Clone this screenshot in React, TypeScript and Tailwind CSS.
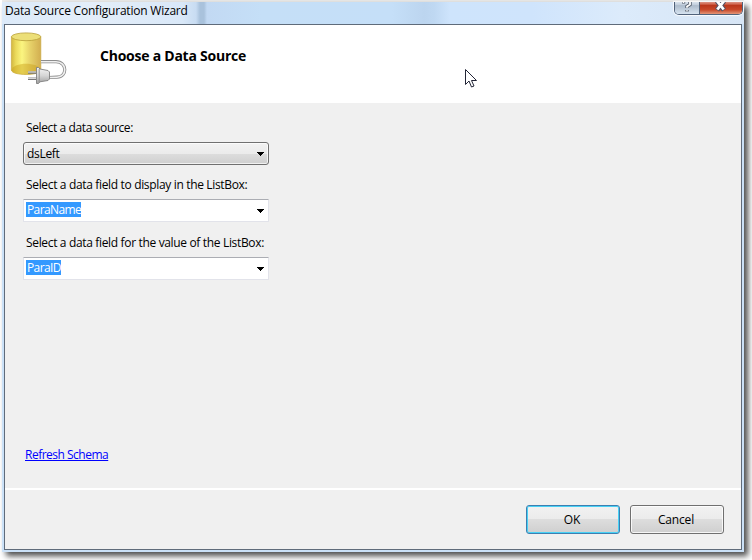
import React from 'react';

function Arrow() {
  return (
    <svg width="7" height="4" viewBox="0 0 7 4" shapeRendering="crispEdges">
      <path d="M0 0H7V1H6V2H5V3H4V4H3V3H2V2H1V1H0Z" fill="#000" />
    </svg>
  );
}

function DataSourceIcon() {
  return (
    <svg className="ml-[5px] mt-[7px] shrink-0" width="58" height="54" viewBox="0 0 58 54">
      <defs>
        <linearGradient id="body">
          <stop offset="0" stopColor="#d3b840" />
          <stop offset=".15" stopColor="#ebda5c" />
          <stop offset=".36" stopColor="#fbf580" />
          <stop offset=".65" stopColor="#e6d068" />
          <stop offset="1" stopColor="#d2ae50" />
        </linearGradient>
        <linearGradient id="plug" x2="0" y2="1">
          <stop offset="0" stopColor="#f4f4f4" />
          <stop offset=".5" stopColor="#d6d6d6" />
          <stop offset="1" stopColor="#a0a0a0" />
        </linearGradient>
      </defs>
      <path d="M1.4 4.8V38C1.4 44 30.8 44 30.8 38V4.8Z" fill="url(#body)" stroke="#c8a93f" strokeWidth=".7" />
      <path d="M1.6 38C3 29.5 29 29.5 30.6 38C29 43.8 3 43.8 1.6 38Z" fill="#c99f16" opacity=".45" />
      <ellipse cx="16.1" cy="4.8" rx="14.7" ry="3.9" fill="#ecdf78" stroke="#b9a03a" strokeWidth=".8" />
      <path d="M31 29.7H46C57.5 29.7 57.5 45.2 47 45.2L39 45.5" fill="none" stroke="#8c8c8c" strokeWidth="3.2" />
      <path d="M31 29.7H46C57.5 29.7 57.5 45.2 47 45.2L39 45.5" fill="none" stroke="#f0f0f0" strokeWidth="1.6" />
      <path d="M18 40.5H26M18 46.8H26" stroke="#777" strokeWidth="2.4" />
      <path d="M18 40H26M18 46.3H26" stroke="#eee" strokeWidth="1" />
      <path d="M26.5 35.5H28.5L30 37 38 38.5 39.5 40V47L38 48.5 30 49.8 28.5 51.5H26.5Z" fill="url(#plug)" stroke="#808080" strokeWidth=".9" />
      <path d="M29.2 37V50" stroke="#8a8a8a" strokeWidth=".9" />
    </svg>
  );
}

function Combo({ value, editable = false }: { value: string; editable?: boolean }) {
  return (
    <div
      className={
        editable
          ? 'flex h-[23px] w-[246px] items-center justify-between rounded-[1px] border border-[#e2e3ea] border-t-[#abadb3] bg-white pl-[2px] pr-[4px]'
          : 'flex h-[23px] w-[246px] items-center justify-between rounded-[3px] border border-[#707070] bg-[linear-gradient(#f2f2f2_0,#ebebeb_50%,#dddddd_50%,#cfcfcf_100%)] pl-[3px] pr-[4px] shadow-[inset_0_0_0_1px_rgba(255,255,255,0.7)]'
      }
    >
      <span
        className={
          editable
            ? '-mt-[2px] h-[15px] bg-[#3399ff] pl-px leading-[15px] tracking-[-0.6px] text-white'
            : 'leading-[15px] tracking-[-0.3px]'
        }
      >
        {value}
      </span>
      <Arrow />
    </div>
  );
}

function TitleBar() {
  return (
    <div className="relative h-[22px] shrink-0 bg-[linear-gradient(90deg,#dceaf9_0,#e4eef9_90px,#d9e8f8_180px,#c8dcf2_194px,#a9c2dc_198px,#a9c2dc_202px,#c2d9f3_205px,#c5dff7_260px,#c5dff8_390px,#bcd5ef_422px,#bfd8f2_432px,#cee4fc_448px,#cfe4fc_530px,#dcebfb_620px,#d7e5f5_100%)]">
      <div className="pl-[3px] leading-[17px] tracking-[-0.21px]">Data Source Configuration Wizard</div>
      <div className="absolute right-[1px] top-0 flex h-[13px] w-[69px] overflow-hidden rounded-b-[5px] border border-t-0 border-[#51627a] shadow-[0_0_1px_1px_rgba(255,255,255,0.8)]">
        <div className="flex w-[25px] justify-center border-r border-[#51627a] bg-[linear-gradient(#dae3ed_0,#c0ccda_25%,#adbbcb_30%,#d6e3f0_100%)]">
          <svg width="10" height="11" viewBox="0 0 10 11">
            <path d="M1.5 1.5V0M8 -1V2.5L5 4.5V6M5 8V9.5" fill="none" stroke="#505967" strokeWidth="3.4" />
            <path d="M1.5 1V0M8 -1V2.5L5 4.5V5.8M5 8.2V9.2" fill="none" stroke="#fff" strokeWidth="1.8" />
          </svg>
        </div>
        <div className="flex grow justify-center bg-[linear-gradient(#dc9586_0,#ce6048_20%,#b8351a_25%,#c84829_65%,#e39679_100%)] pr-[2px]">
          <svg width="13" height="11" viewBox="0 0 13 11">
            <path d="M3 -1L10 8M10 -1L3 8" stroke="#575364" strokeWidth="5" />
            <path d="M3 -1L9.7 7.5M10 -1L3.3 7.5" stroke="#fff" strokeWidth="2.8" />
          </svg>
        </div>
      </div>
    </div>
  );
}

const buttonFace =
  'flex h-[29px] w-[94px] items-center justify-center rounded-[3px] border bg-[linear-gradient(#f2f2f2_0,#ebebeb_50%,#dddddd_50%,#cfcfcf_100%)] pr-[2px] tracking-[-0.15px]';

export default function App() {
  return (
    <div className="relative h-[560px] w-[752px] overflow-hidden bg-white pl-[2px] font-['Open_Sans','Noto_Sans',sans-serif] text-[12px] text-black">
      <div className="h-[2px] w-[742px] bg-[#ebebea]" />
      <div className="flex h-[550px] w-[742px] flex-col bg-[#cbe1f7] shadow-[4px_4px_6px_rgba(0,0,0,0.7)]">
        <TitleBar />
        <main className="ml-[2px] flex h-[526px] w-[738px] flex-col border border-[#5f6b7a] bg-[#f0f0f0]">
          <header className="flex h-[78px] shrink-0 bg-white">
            <DataSourceIcon />
            <h1 className="ml-[32px] mt-[21px] text-[14px] font-bold leading-[20px] tracking-[-0.24px]">Choose a Data Source</h1>
          </header>
          <section className="flex h-[385px] shrink-0 flex-col pl-[18px]">
            <label className="mt-[16px] h-[23px] pl-[3px] leading-[18px] tracking-[-0.38px]">Select a data source:</label>
            <Combo value="dsLeft" />
            <label className="mt-[11px] h-[23px] pl-[3px] leading-[18px] tracking-[-0.34px]">Select a data field to display in the ListBox:</label>
            <Combo value="ParaName" editable />
            <label className="mt-[12px] h-[23px] pl-[3px] leading-[18px] tracking-[-0.34px]">Select a data field for the value of the ListBox:</label>
            <Combo value="ParaID" editable />
            <a className="ml-[2px] mt-[166px] w-fit leading-[18px] tracking-[-0.5px] text-[#0000ff] underline">Refresh Schema</a>
          </section>
          <div className="h-[2px] shrink-0 bg-white" />
          <footer className="flex justify-end gap-[10px] pr-[17px] pt-[15px]">
            <button className={buttonFace + ' border-[#3c7fb1] shadow-[inset_0_0_0_1px_#48d1f5]'}>OK</button>
            <button className={buttonFace + ' border-[#707070] shadow-[inset_0_0_0_1px_rgba(255,255,255,0.8)]'}>Cancel</button>
          </footer>
        </main>
      </div>
      <svg className="absolute left-[465px] top-[69px]" width="13" height="20" viewBox="0 0 13 20">
        <path d="M.5 .5V15.5L4 12 6.5 18 9 17 6.5 11.5H11.5Z" fill="#fff" stroke="#222536" />
      </svg>
    </div>
  );
}
